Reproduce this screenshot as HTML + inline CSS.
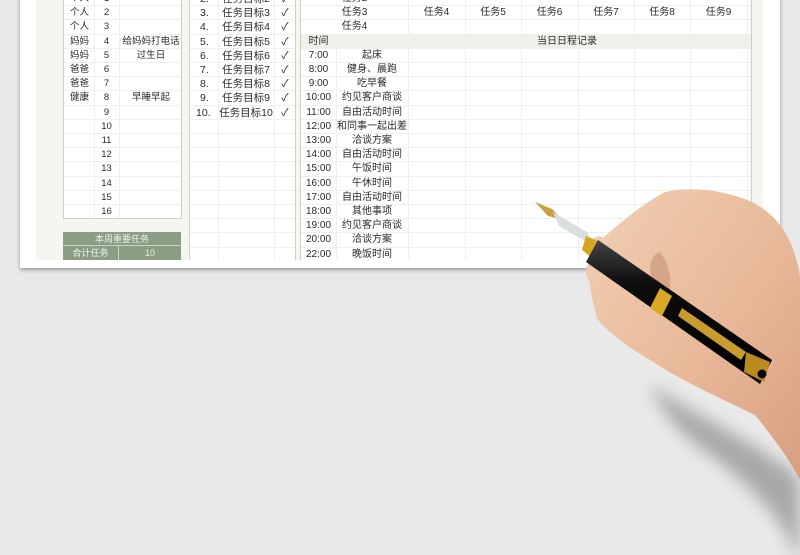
<!DOCTYPE html>
<html><head><meta charset="utf-8"><style>
*{margin:0;padding:0;box-sizing:border-box}
body{width:800px;height:555px;overflow:hidden;background:#e9e9e9;position:relative;font-family:"Liberation Sans","Noto Sans CJK SC",sans-serif;font-size:10px;color:#2a2a2a}
.paper{position:absolute;left:20px;top:-5px;width:760px;height:273px;background:#fff;box-shadow:0 2px 4px rgba(0,0,0,.35)}
.inner{position:absolute;left:36px;top:0;width:727px;height:260px;background:#f5f5f1}
.box{position:absolute;background:#fff;border:1px solid #cfd0bf;overflow:hidden}
.r{position:absolute;left:0;right:0;height:14.2px;border-bottom:1px solid #eef0ea;line-height:14.2px}
.r span{position:absolute;top:0;text-align:center;white-space:nowrap}
.vl{position:absolute;top:0;bottom:0;border-left:1px solid #eef0ea}
</style></head><body>
<div class="paper"></div>
<div class="inner"></div>

<div class="box" style="left:63px;top:-10px;width:119px;height:229px;font-size:9.5px">
<div class="vl" style="left:30px"></div><div class="vl" style="left:55px"></div>
<div class="r" style="top:1px"><span style="left:6px">个人</span><span style="left:30px;width:25px">1</span></div>
<div class="r" style="top:15.2px"><span style="left:6px">个人</span><span style="left:30px;width:25px">2</span></div>
<div class="r" style="top:29.4px"><span style="left:6px">个人</span><span style="left:30px;width:25px">3</span></div>
<div class="r" style="top:43.6px"><span style="left:6px">妈妈</span><span style="left:30px;width:25px">4</span><span style="left:55px;width:64px">给妈妈打电话</span></div>
<div class="r" style="top:57.8px"><span style="left:6px">妈妈</span><span style="left:30px;width:25px">5</span><span style="left:55px;width:64px">过生日</span></div>
<div class="r" style="top:72px"><span style="left:6px">爸爸</span><span style="left:30px;width:25px">6</span></div>
<div class="r" style="top:86.2px"><span style="left:6px">爸爸</span><span style="left:30px;width:25px">7</span></div>
<div class="r" style="top:100.4px"><span style="left:6px">健康</span><span style="left:30px;width:25px">8</span><span style="left:55px;width:64px">早睡早起</span></div>
<div class="r" style="top:114.6px"><span style="left:30px;width:25px">9</span></div>
<div class="r" style="top:128.8px"><span style="left:30px;width:25px">10</span></div>
<div class="r" style="top:143px"><span style="left:30px;width:25px">11</span></div>
<div class="r" style="top:157.2px"><span style="left:30px;width:25px">12</span></div>
<div class="r" style="top:171.4px"><span style="left:30px;width:25px">13</span></div>
<div class="r" style="top:185.6px"><span style="left:30px;width:25px">14</span></div>
<div class="r" style="top:199.8px"><span style="left:30px;width:25px">15</span></div>
<div class="r" style="top:214px"><span style="left:30px;width:25px">16</span></div>
</div>
<div style="position:absolute;left:63px;top:232px;width:118px;height:28px;background:#8a9e84;color:#eef2ea;font-size:9px">
<div style="height:14px;line-height:14px;text-align:center;border-bottom:1px solid #c9d3c5">本周重要任务</div>
<div style="height:14px;line-height:14px;position:relative"><span style="position:absolute;left:0;width:55px;text-align:center">合计任务</span><span style="position:absolute;left:55px;top:0;bottom:0;border-left:1px solid #c9d3c5;width:63px;text-align:center">10</span></div>
</div>

<div class="box" style="left:189px;top:-10px;width:107px;height:275px;border-bottom:none;font-size:10.5px">
<div class="vl" style="left:28px"></div><div class="vl" style="left:84px"></div>
<div class="r" style="top:1px"><span style="left:10px">2.</span><span style="left:28px;width:56px">任务目标2</span><span style="left:84px;width:22px">✓</span></div>
<div class="r" style="top:15.2px"><span style="left:10px">3.</span><span style="left:28px;width:56px">任务目标3</span><span style="left:84px;width:22px">✓</span></div>
<div class="r" style="top:29.4px"><span style="left:10px">4.</span><span style="left:28px;width:56px">任务目标4</span><span style="left:84px;width:22px">✓</span></div>
<div class="r" style="top:43.6px"><span style="left:10px">5.</span><span style="left:28px;width:56px">任务目标5</span><span style="left:84px;width:22px">✓</span></div>
<div class="r" style="top:57.8px"><span style="left:10px">6.</span><span style="left:28px;width:56px">任务目标6</span><span style="left:84px;width:22px">✓</span></div>
<div class="r" style="top:72px"><span style="left:10px">7.</span><span style="left:28px;width:56px">任务目标7</span><span style="left:84px;width:22px">✓</span></div>
<div class="r" style="top:86.2px"><span style="left:10px">8.</span><span style="left:28px;width:56px">任务目标8</span><span style="left:84px;width:22px">✓</span></div>
<div class="r" style="top:100.4px"><span style="left:10px">9.</span><span style="left:28px;width:56px">任务目标9</span><span style="left:84px;width:22px">✓</span></div>
<div class="r" style="top:114.6px"><span style="left:6px">10.</span><span style="left:28px;width:56px">任务目标10</span><span style="left:84px;width:22px">✓</span></div>
<div class="r" style="top:128.8px"></div><div class="r" style="top:143px"></div><div class="r" style="top:157.2px"></div><div class="r" style="top:171.4px"></div><div class="r" style="top:185.6px"></div><div class="r" style="top:199.8px"></div><div class="r" style="top:214px"></div><div class="r" style="top:228.2px"></div><div class="r" style="top:242.4px"></div>
</div>

<div class="box" style="left:300px;top:-10px;width:452px;height:275px;border-bottom:none">
<div class="vl" style="left:107px"></div><div class="vl" style="left:164px"></div><div class="vl" style="left:220px"></div><div class="vl" style="left:277px"></div><div class="vl" style="left:333px"></div><div class="vl" style="left:389px"></div><div class="vl" style="left:446px"></div>
<div class="r" style="top:1px"><span style="left:0;width:107px">任务2</span></div>
<div class="r" style="top:15.2px"><span style="left:0;width:107px">任务3</span><span style="left:107px;width:57px">任务4</span><span style="left:164px;width:56px">任务5</span><span style="left:220px;width:57px">任务6</span><span style="left:277px;width:56px">任务7</span><span style="left:333px;width:56px">任务8</span><span style="left:389px;width:57px">任务9</span></div>
<div class="r" style="top:29.4px"><span style="left:0;width:107px">任务4</span></div>
<div class="r" style="top:43.6px;background:#f0f0ea;z-index:1"><span style="left:0;width:35px">时间</span><span style="left:150px;width:232px">当日日程记录</span></div>
<div class="vl" style="left:35px;top:58px"></div>
<div class="r" style="top:57.8px"><span style="left:0;width:35px">7:00</span><span style="left:35px;width:72px">起床</span></div>
<div class="r" style="top:72px"><span style="left:0;width:35px">8:00</span><span style="left:35px;width:72px">健身、晨跑</span></div>
<div class="r" style="top:86.2px"><span style="left:0;width:35px">9:00</span><span style="left:35px;width:72px">吃早餐</span></div>
<div class="r" style="top:100.4px"><span style="left:0;width:35px">10:00</span><span style="left:35px;width:72px">约见客户商谈</span></div>
<div class="r" style="top:114.6px"><span style="left:0;width:35px">11:00</span><span style="left:35px;width:72px">自由活动时间</span></div>
<div class="r" style="top:128.8px"><span style="left:0;width:35px">12:00</span><span style="left:35px;width:72px">和同事一起出差</span></div>
<div class="r" style="top:143px"><span style="left:0;width:35px">13:00</span><span style="left:35px;width:72px">洽谈方案</span></div>
<div class="r" style="top:157.2px"><span style="left:0;width:35px">14:00</span><span style="left:35px;width:72px">自由活动时间</span></div>
<div class="r" style="top:171.4px"><span style="left:0;width:35px">15:00</span><span style="left:35px;width:72px">午饭时间</span></div>
<div class="r" style="top:185.6px"><span style="left:0;width:35px">16:00</span><span style="left:35px;width:72px">午休时间</span></div>
<div class="r" style="top:199.8px"><span style="left:0;width:35px">17:00</span><span style="left:35px;width:72px">自由活动时间</span></div>
<div class="r" style="top:214px"><span style="left:0;width:35px">18:00</span><span style="left:35px;width:72px">其他事项</span></div>
<div class="r" style="top:228.2px"><span style="left:0;width:35px">19:00</span><span style="left:35px;width:72px">约见客户商谈</span></div>
<div class="r" style="top:242.4px"><span style="left:0;width:35px">20:00</span><span style="left:35px;width:72px">洽谈方案</span></div>
<div class="r" style="top:256.6px"><span style="left:0;width:35px">22:00</span><span style="left:35px;width:72px">晚饭时间</span></div>
</div>
<div style="position:absolute;left:20px;top:260px;width:760px;height:8px;background:#fff"></div>

<svg style="position:absolute;left:0;top:0" width="800" height="555" viewBox="0 0 800 555">
<defs>
<linearGradient id="sk" x1="0" y1="0" x2="1" y2="1"><stop offset="0" stop-color="#f1cfb4"/><stop offset=".55" stop-color="#e8b898"/><stop offset="1" stop-color="#d79f80"/></linearGradient>
<linearGradient id="pen" x1="0" y1="0" x2="0" y2="1"><stop offset="0" stop-color="#444"/><stop offset=".3" stop-color="#0d0d0d"/><stop offset="1" stop-color="#000"/></linearGradient>
<filter id="bl"><feGaussianBlur stdDeviation="8"/></filter>
</defs>
<path d="M650 385 C705 420 750 440 790 470 L800 480 L800 555 L795 555 C785 520 750 485 710 455 C680 435 660 410 650 385Z" fill="rgba(0,0,0,.28)" filter="url(#bl)"/>
<path d="M600 240 C615 228 640 205 665 192 C690 186 725 190 752 202 C775 214 788 232 795 255 C798 265 800 272 800 280 L800 480 C790 460 775 440 755 415 C720 398 680 380 650 360 C625 345 605 330 597 318 C592 300 588 282 590 266 C594 258 600 254 606 252 C600 248 598 244 600 240Z" fill="url(#sk)"/>
<path d="M660 252 C668 262 674 280 668 298 C660 296 652 285 650 270 C650 260 654 254 660 252Z" fill="#c48d70" opacity=".55"/>
<path d="M600 236 C590 238 584 244 590 248 C598 248 604 244 606 240Z" fill="#f0cbb1"/>
<path d="M592 260 C585 264 584 276 590 282 C596 280 600 270 598 262Z" fill="#efc9ae"/>
<path d="M535 202 L552 209 L563 220 L548 216Z" fill="#c8a042"/>
<path d="M553 212 L587 232 L594 246 L559 226Z" fill="#dadede"/>
<path d="M586 236 L600 242 L592 258 L582 250Z" fill="#d7a526"/>
<path d="M598 240 L772 360 L760 384 L586 262Z" fill="url(#pen)"/>
<path d="M660 288 L672 296 L662 316 L650 308Z" fill="#d9a827"/>
<path d="M682 308 L746 352 L741 360 L678 316Z" fill="#c99c30"/>
<path d="M746 352 L770 362 L764 382 L744 372Z" fill="#b88a20"/>
<circle cx="762" cy="374" r="4.5" fill="#0a0a0a"/>
</svg>
</body></html>
